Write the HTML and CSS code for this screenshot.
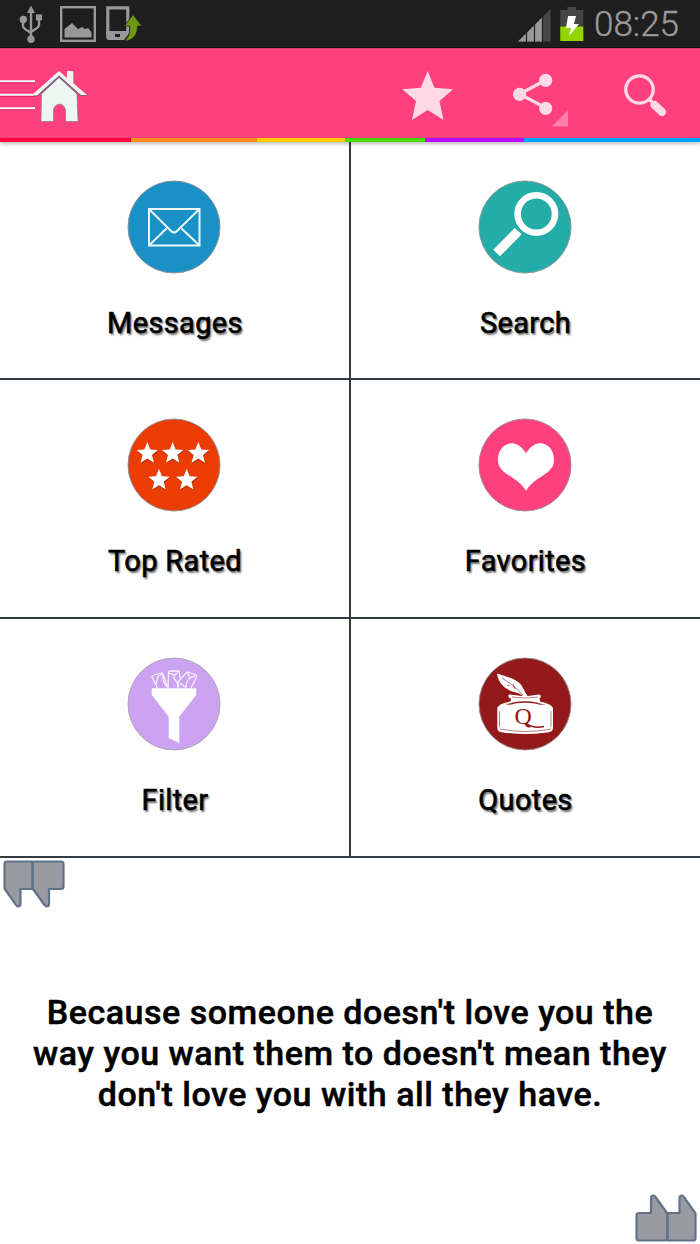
FILE: index.html
```
<!DOCTYPE html>
<html lang="en">
<head>
    <meta charset="UTF-8" />
    <meta name="viewport" content="width=device-width, initial-scale=1.0" />
    <title>Messages</title>
    <link rel="stylesheet" href="styles.css">
</head>
<body>
    <div class="status-bar">
      <div class="status-left">
        <svg width="24" height="40" viewBox="0 0 24 40">
          <path d="M12 6V34M4 15V22Q4 24 6 25L12 29M20 14V21Q20 23 18 24L12 28" fill="none" stroke="#989898" stroke-width="2.4" />
          <path d="M12 1.500L16 9H8Z" fill="#989898" />
          <circle cx="4.300" cy="15.500" r="3.700" fill="#989898" />
          <rect x="17" y="10.500" width="6" height="5.800" fill="#989898" />
          <circle cx="12" cy="35.300" r="3.700" fill="#989898" />
        </svg>
        <svg width="36" height="36" viewBox="0 0 36 36">
          <rect x="1.200" y="1.200" width="33.600" height="33.600" fill="none" stroke="#989898" stroke-width="2.400" />
          <path d="M4.500 31.500V23L12 17L18 23L22 21L25 23L28 22L31.500 26V31.500Z" fill="#989898" />
        </svg>
        <svg width="36" height="36" viewBox="0 0 36 36">
          <path d="M1.800 28V1.800H21.800V28" fill="none" stroke="#989898" stroke-width="3.200" />
          <path d="M0.200 25H22V29L18 34H3Q0.200 34 0.200 31Z" fill="#989898" />
          <rect x="9" y="28" width="5" height="3" fill="#1e1e1e" />
          <path d="M27 8.500L36 20H31.500C32 28 27 35 18.500 35C23 31 24 26 23.500 20H18.500Z" fill="#6d9812" stroke="#1e1e1e" stroke-width="0.800" />
        </svg>
      </div>
      <div class="status-right">
        <svg width="33" height="33" viewBox="0 0 33 33">
          <path d="M0 32.500L32.500 0V32.500Z" fill="#474747" />
          <path d="M0 32.500L24 8.500V32.500Z" fill="#999" />
          <path d="M8.500 22V33M16.500 14V33M24.500 6V33" stroke="#1e1e1e" stroke-width="1.200" />
        </svg>
        <svg width="24" height="35" viewBox="0 0 24 35">
          <path d="M7.500 1H16V4H23.300V35H0.300V4H7.500Z" fill="#454545" />
          <rect x="0.300" y="20.500" width="23" height="14.500" fill="#92d500" />
          <path d="M8 10H16L14 18H19L9 30L11 22H6Z" fill="#fff" />
        </svg>
        <span class="clock">08:25</span>
      </div>
    </div>

    <div class="action-bar">
      <svg class="home" width="88" height="90" viewBox="0 0 88 90">
        <path d="M0 34.500H35M0 48H35M0 61.500H35" stroke="#c40049" stroke-width="1.500" opacity="0.600" />
        <path d="M0 33.200H35M0 46.700H35M0 60.200H35" stroke="#fff" stroke-width="2" />
        <path d="M67 24Q67 23 68 23H72Q73 23 73.300 24V37L67 31Z" fill="#edf7f1" />
        <path d="M41.500 46L59 29.500L77 46L78 73.500H65.500V63C65.500 54 53.500 54 53.500 63V73.500H41Z" fill="#edf7f1" stroke="#6b7385" stroke-width="0.600" />
        <path d="M33 48L59 24L86 48H80.500L59 29.500L38 48.500Z" fill="#5f6585" opacity="0.750" />
        <path d="M32 47L59 23L87 47H81L59 27.500L37 47.500Z" fill="#edf7f1" />
      </svg>
      <div class="actions">
        <svg width="52" height="51" viewBox="0 0 52 51">
          <path d="M25.700 1L32.500 17.700L51 19.300L37.500 31L41.500 50L25.700 40L10 50L14 31L0.300 19.300L18.800 17.700Z" fill="#ffd9e6" />
        </svg>
        <svg width="56" height="54" viewBox="0 0 56 54">
          <path d="M33 7L6.500 21L33 35" fill="none" stroke="#ffd9e6" stroke-width="3.200" />
          <circle cx="6.500" cy="21.300" r="6.600" fill="#ffd9e6" />
          <circle cx="32.700" cy="7.300" r="6.600" fill="#ffd9e6" />
          <circle cx="32.700" cy="35.300" r="6.600" fill="#ffd9e6" />
          <path d="M39 53.600H55V37.300Z" fill="#ff80aa" />
        </svg>
        <svg width="44" height="44" viewBox="0 0 44 44">
          <circle cx="15.500" cy="15.500" r="13.700" fill="none" stroke="#ffd9e6" stroke-width="3.300" />
          <path d="M25 25L30 30" stroke="#ffd9e6" stroke-width="3.500" />
          <path d="M30.500 31L38 38" stroke="#ffd9e6" stroke-width="8" stroke-linecap="round" />
        </svg>
      </div>
    </div>
    <div class="strip">
      <span class="red"></span>
      <span class="orange"></span>
      <span class="yellow"></span>
      <span class="green"></span>
      <span class="purple"></span>
      <span class="blue"></span>
    </div>

    <div class="menu">
      <div class="tile">
        <svg class="icon" viewBox="-47 -47 94 94">
          <circle r="46" fill="#1991c6" stroke="#8d9499" />
          <g fill="none" stroke="#eef8fc" stroke-width="2">
            <rect x="-25" y="-18" width="50.500" height="36.500" />
            <path d="M-25 -18L-3 4Q0 7 3 4L25.500 -18M-25 18.500L-7.500 1.500M25.500 18.500L7.500 1.500" />
          </g>
        </svg>
        <span class="label">Messages</span>
      </div>
      <div class="tile">
        <svg class="icon" viewBox="-47 -47 94 94">
          <circle r="46" fill="#24aca8" stroke="#8d9999" />
          <circle cx="11.300" cy="-13" r="18.700" fill="none" stroke="#fff" stroke-width="6.600" />
          <path d="M-31.700 22.700L-25 29.300L-3.300 7.300L-10.300 1Z" fill="#fff" />
        </svg>
        <span class="label">Search</span>
      </div>
      <div class="tile">
        <svg class="icon" viewBox="-47 -47 94 94">
          <defs>
            <path id="star" d="M0 -11.200L3 -3.700L10.700 -3.300L4.700 1.700L6.700 9.500L0 5.200L-6.700 9.500L-4.700 1.700L-10.700 -3.300L-3 -3.700Z" />
          </defs>
          <circle r="46" fill="#ea3c03" stroke="#949090" />
          <g fill="#8e2a0a" opacity="0.700" transform="translate(0.500 1)">
            <use href="#star" x="-26.700" y="-11.700" />
            <use href="#star" x="-1.300" y="-11.700" />
            <use href="#star" x="24.300" y="-11.700" />
            <use href="#star" x="-15" y="15" />
            <use href="#star" x="12.700" y="15" />
          </g>
          <g fill="#fff">
            <use href="#star" x="-26.700" y="-11.700" />
            <use href="#star" x="-1.300" y="-11.700" />
            <use href="#star" x="24.300" y="-11.700" />
            <use href="#star" x="-15" y="15" />
            <use href="#star" x="12.700" y="15" />
          </g>
        </svg>
        <span class="label">Top Rated</span>
      </div>
      <div class="tile">
        <svg class="icon" viewBox="-47 -47 94 94">
          <circle r="46" fill="#ff407f" stroke="#a08c94" />
          <path d="M1 -11.700C-3 -18 -8 -21.700 -13 -21.700C-21 -21.700 -27 -15 -27 -5C-27 4 -20 8 -12 13C-6 17 -2 21 1 25.700C4 21 8 17 14 13C22 8 29 4 29 -5C29 -15 23 -21.700 15 -21.700C10 -21.700 5 -18 1 -11.700Z" fill="#fff" />
        </svg>
        <span class="label">Favorites</span>
      </div>
      <div class="tile">
        <svg class="icon" viewBox="-47 -47 94 94">
          <circle r="46" fill="#cba3f0" stroke="#b0a6b8" />
          <g fill="none" stroke="#f8effd" stroke-width="1.300" stroke-linejoin="round">
            <path d="M-16.500 -16L-22 -27Q-22 -28 -20 -29L-13 -31Q-11 -31 -11 -30L-6 -16M-18 -20L-16 -28L-11 -30C-12 -22 -9 -20 -6 -16" />
            <path d="M-6 -16L-5.500 -31Q-5.500 -33 -4 -33H4Q5.500 -33 5.500 -31L6 -26M5.500 -32C-2 -29 -1 -26 2 -23Q4 -20 4 -16M-5 -31L0 -29" />
            <path d="M5 -17L4 -22L12 -31Q13 -32 14 -32L22 -29Q23 -28 22.500 -27L17 -16M21 -28C15 -27 12 -24 12 -16M13 -32L16 -26M6 -21L11 -17" />
          </g>
          <path d="M-22.300 -15.700H22.300V-9.300L5.300 12.700V39L-5.300 34V12.700L-22.300 -9.300Z" fill="#fff" />
        </svg>
        <span class="label">Filter</span>
      </div>
      <div class="tile">
        <svg class="icon" viewBox="-47 -47 94 94">
          <circle r="46" fill="#93191b" stroke="#948888" />
          <path d="M-28 -30.500C-18 -27 -6 -25 -2 -16Q0 -12 2.500 -8H-2Q-5 -11 -11 -12C-21 -15 -27 -22 -28 -30.500Z" fill="#fff" />
          <path d="M-23 -26Q-12 -20 -2 -9M-18 -19L-15 -18M-12 -20L-10 -15" fill="none" stroke="#93191b" stroke-width="0.600" />
          <path d="M-16.700 -8.500Q-16.700 -9.500 -15 -9.500L-3 -8L3 -8L14 -9.500Q16 -9.500 15.700 -7.500Q15.500 -6 14.500 -5.500L15 -2.500Q28 0 28 5V24Q28 28 22 28.500Q0 31.500 -22 28.500Q-27.700 28 -27.700 24V5Q-27.700 0 -14.500 -2.500L-14 -5.500Q-16.700 -6 -16.700 -8.500Z" fill="#fff" />
          <path d="M-13 -7Q0 -5 13 -7M-25 25Q0 30 26 25M-25.500 7V23M26 7V23" fill="none" stroke="#a6474a" stroke-width="0.700" />
          <path d="M-20 0Q-15 0 -12 -1.500Q0 -4 12 -1.500Q15 0 21 0Q14 1.500 10 -0.500Q0 -2 -10 -0.500Q-14 1.500 -20 0Z" fill="#93191b" />
          <text class="ink-letter" x="-10.500" y="19.500">Q</text>
          <path d="M1 19Q8 25 19 22.500" fill="none" stroke="#93191b" stroke-width="1.500" />
        </svg>
        <span class="label">Quotes</span>
      </div>
    </div>

    <div class="quote">
      <svg width="62" height="48" viewBox="0 0 62 48">
        <g fill="#9a9aa3" stroke="#5f7287" stroke-width="2.200" stroke-linejoin="round">
          <path d="M4 1.500H29.500V29H17.500V44Q17.500 46.500 15 46.500Q14 46.500 13 45L1.500 28.500V4Q1.500 1.500 4 1.500Z" />
          <path d="M32 1.500H58Q60.500 1.500 60.500 4V26.500Q60.500 29 58 29H46V44Q46 46.500 43.500 46.500Q42.500 46.500 41.500 45L29.700 28.500V4Q29.700 1.500 32 1.500Z" />
        </g>
      </svg>
      <p class="quote-text">Because someone doesn't love you the<br>way you want them to doesn't mean they<br>don't love you with all they have.</p>
      <svg class="mark-end" width="62" height="48" viewBox="0 0 62 48">
        <g fill="#9a9aa3" stroke="#5f7287" stroke-width="2.200" stroke-linejoin="round">
          <path d="M4 1.500H29.500V29H17.500V44Q17.500 46.500 15 46.500Q14 46.500 13 45L1.500 28.500V4Q1.500 1.500 4 1.500Z" />
          <path d="M32 1.500H58Q60.500 1.500 60.500 4V26.500Q60.500 29 58 29H46V44Q46 46.500 43.500 46.500Q42.500 46.500 41.500 45L29.700 28.500V4Q29.700 1.500 32 1.500Z" />
        </g>
      </svg>
    </div>
</body>
</html>
```
FILE: styles.css
```
* {
    box-sizing: border-box;
}

body {
    margin: 0;
    height: 1244px;
    display: flex;
    flex-direction: column;
    font-family: Roboto, sans-serif;
    background-color: #fff;
    color: #000;
    overflow: hidden;
}

svg {
    display: block;
    flex-shrink: 0;
}

.status-bar {
    height: 48px;
    display: flex;
    justify-content: space-between;
    background-color: #1e1e1e;
    border-bottom: 1px solid #111;
}

.status-left {
    display: flex;
    align-items: flex-start;
    padding: 4px 0 0 19px;
}

.status-left svg + svg {
    margin: 2px 0 0 17px;
}

.status-left svg + svg + svg {
    margin-left: 10px;
}

.status-right {
    display: flex;
    align-items: flex-start;
    padding: 6px 21px 0 0;
}

.status-right svg:first-child {
    margin: 3px 9px 0 0;
}

.clock {
    margin-left: 10px;
    font-size: 35px;
    font-weight: 300;
    line-height: 37px;
    color: #999;
    -webkit-text-stroke: 0.4px #999;
}

.action-bar {
    position: relative;
    z-index: 1;
    height: 90px;
    display: flex;
    justify-content: space-between;
    background-color: #ff407f;
    border-top: 1px solid #d93a70;
}

.home {
    margin-top: -1px;
}

.actions {
    display: flex;
    align-items: flex-start;
    gap: 57px;
    padding: 21px 32px 0 0;
}

.actions svg:nth-child(2) {
    margin: 3px -2px 0 2px;
}

.actions svg:nth-child(3) {
    margin-top: 4px;
}

.strip {
    position: relative;
    height: 4px;
    display: grid;
    grid-template-columns: 131px 126px 88px 80px 99px 1fr;
    box-shadow: 0 1px 5px rgba(0, 0, 0, 0.4);
}

.red { background-color: #ff0040; }
.orange { background-color: #f98a1b; }
.yellow { background-color: #ffca00; }
.green { background-color: #4fd800; }
.purple { background-color: #b90aff; }
.blue { background-color: #00a3ff; }

.menu {
    display: grid;
    grid-template-columns: 351px 349px;
    grid-template-rows: 238px 239px 239px;
}

.tile {
    display: flex;
    flex-direction: column;
    align-items: center;
    padding: 38px 2px 0 0;
    border-bottom: 2px solid #343a42;
}

.tile:nth-child(odd) {
    padding-right: 1px;
    border-right: 2px solid #343a42;
}

.icon {
    width: 94px;
    height: 94px;
}

.label {
    margin-top: 31px;
    padding-left: 2px;
    font-size: 29px;
    font-weight: 400;
    line-height: 36px;
    letter-spacing: 0.35px;
    -webkit-text-stroke: 0.6px #000;
    text-shadow: 1.5px 1.5px 2px rgba(0, 0, 0, 0.6);
}

.ink-letter {
    font-family: "Liberation Serif", serif;
    font-size: 24px;
    fill: #93191b;
}

.quote {
    flex: 1;
    display: flex;
    flex-direction: column;
    justify-content: space-between;
    padding: 2px 3px;
}

.quote-text {
    margin: 4px 0 0;
    font-size: 34px;
    font-weight: 500;
    line-height: 41px;
    letter-spacing: 0.52px;
    text-align: center;
    -webkit-text-stroke: 0.5px #000;
}

.mark-end {
    align-self: flex-end;
    transform: rotate(180deg);
}
```
